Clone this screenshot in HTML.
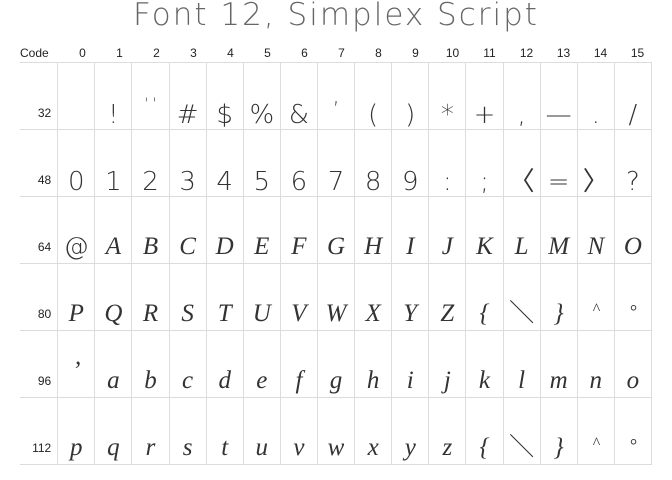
<!DOCTYPE html>
<html><head><meta charset="utf-8"><style>
body{margin:0;width:672px;height:480px;background:#fff;overflow:hidden;position:relative;font-family:"Liberation Sans","DejaVu Sans",sans-serif}
.t{position:absolute;top:-3px;left:0;width:672px;text-align:center;font-family:"DejaVu Sans",sans-serif;font-size:31px;color:#666;letter-spacing:2px;font-weight:200}
.h{position:absolute;top:46px;font-size:12px;color:#222;width:37px;text-align:center}
table{position:absolute;left:20px;top:62px;border-collapse:collapse;table-layout:fixed;width:632px}
td{border:1px solid #dcdcdc;height:67px;box-sizing:border-box;padding:0 0 1px;text-align:center;vertical-align:bottom;font-family:"DejaVu Sans",sans-serif;font-size:26px;color:#333;font-weight:200;line-height:1}
td.l{font-family:"Liberation Sans",sans-serif;font-size:12px;vertical-align:top;padding:44px 6px 0 0;text-align:right;border-left:none;font-weight:normal;color:#222}
.s td:not(.l){font-family:"Liberation Serif",serif;font-style:italic;font-size:25px;padding-bottom:4px;font-weight:normal}
</style></head><body>
<div class="t">Font 12, Simplex Script</div>
<div class="h" style="left:20px;text-align:left">Code</div>
<div class="h" style="left:64px">0</div><div class="h" style="left:101px">1</div><div class="h" style="left:138px">2</div><div class="h" style="left:175px">3</div><div class="h" style="left:212px">4</div><div class="h" style="left:249px">5</div><div class="h" style="left:286px">6</div><div class="h" style="left:323px">7</div><div class="h" style="left:360px">8</div><div class="h" style="left:397px">9</div><div class="h" style="left:434px">10</div><div class="h" style="left:471px">11</div><div class="h" style="left:508px">12</div><div class="h" style="left:545px">13</div><div class="h" style="left:582px">14</div><div class="h" style="left:619px">15</div>
<table>
<colgroup><col style="width:37.7px"><col span="16" style="width:37.1px"></colgroup>
<tr><td class="l">32</td><td></td><td>!</td><td style="font-size:14px;padding-bottom:18px">' '</td><td>#</td><td>$</td><td>%</td><td>&amp;</td><td style="padding-bottom:10px;font-size:20px">’</td><td>(</td><td>)</td><td>*</td><td>+</td><td>,</td><td>—</td><td>.</td><td>/</td></tr>
<tr><td class="l">48</td><td>0</td><td>1</td><td>2</td><td>3</td><td>4</td><td>5</td><td>6</td><td>7</td><td>8</td><td>9</td><td>:</td><td>;</td><td>〈</td><td>=</td><td>〉</td><td>?</td></tr>
<tr class="s"><td class="l">64</td><td style="font-style:normal;font-family:'DejaVu Sans';font-weight:200">@</td><td>A</td><td>B</td><td>C</td><td>D</td><td>E</td><td>F</td><td>G</td><td>H</td><td>I</td><td>J</td><td>K</td><td>L</td><td>M</td><td>N</td><td>O</td></tr>
<tr class="s"><td class="l">80</td><td>P</td><td>Q</td><td>R</td><td>S</td><td>T</td><td>U</td><td>V</td><td>W</td><td>X</td><td>Y</td><td>Z</td><td>{</td><td style="font-style:normal;font-family:'Liberation Sans'">＼</td><td>}</td><td style="font-size:16px;padding-bottom:12px">^</td><td style="font-size:18px;padding-bottom:10px">°</td></tr>
<tr class="s"><td class="l">96</td><td style="padding-bottom:14px">’</td><td>a</td><td>b</td><td>c</td><td>d</td><td>e</td><td>f</td><td>g</td><td>h</td><td>i</td><td>j</td><td>k</td><td>l</td><td>m</td><td>n</td><td>o</td></tr>
<tr class="s"><td class="l">112</td><td>p</td><td>q</td><td>r</td><td>s</td><td>t</td><td>u</td><td>v</td><td>w</td><td>x</td><td>y</td><td>z</td><td>{</td><td style="font-style:normal;font-family:'Liberation Sans'">＼</td><td>}</td><td style="font-size:16px;padding-bottom:12px">^</td><td style="font-size:18px;padding-bottom:10px">°</td></tr>
</table>
</body></html>
